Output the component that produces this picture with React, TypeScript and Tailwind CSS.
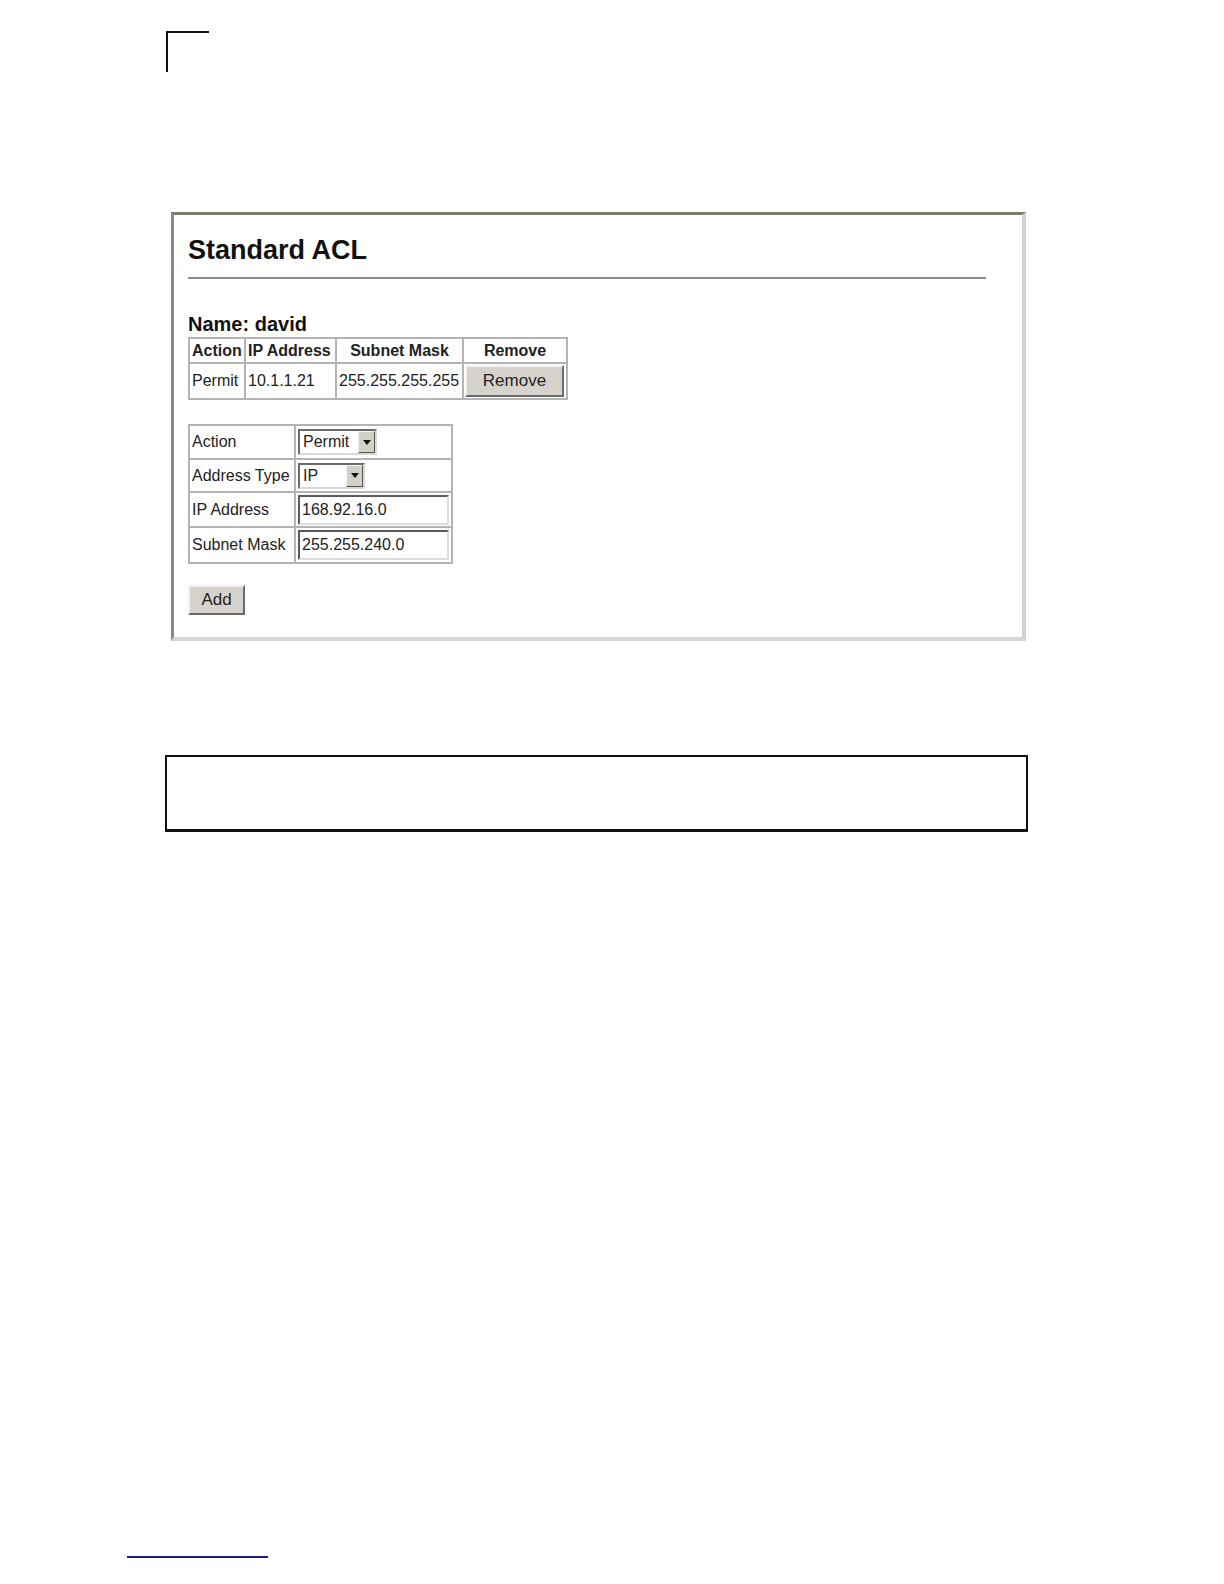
import React from 'react';

const font = { fontFamily: '"Liberation Sans", Arial, sans-serif' };

const cell = 'border-2 border-[#b4b4b4] px-[2px] leading-none';

const SelectBox = ({ value, width }: { value: string; width: string }) => (
  <div
    className={`flex h-[26px] items-stretch border-2 border-t-[#6b6b6b] border-l-[#6b6b6b] border-r-[#d8d8d8] border-b-[#d8d8d8] bg-white ${width}`}
  >
    <div className="flex flex-1 items-center pl-[3px] text-[16px] text-[#222]">{value}</div>
    <div className="flex w-[17px] items-center justify-center border border-t-[#f4f4f4] border-l-[#f4f4f4] border-r-[#555] border-b-[#555] bg-[#d4d0c8]">
      <svg width="8" height="5" viewBox="0 0 8 5">
        <path d="M0 0h8L4 5z" fill="#111" />
      </svg>
    </div>
  </div>
);

const TextBox = ({ value }: { value: string }) => (
  <div className="flex h-[30px] w-[151px] items-center border-2 border-t-[#5a5a5a] border-l-[#5a5a5a] border-r-[#dcdcdc] border-b-[#dcdcdc] bg-white pl-[2px] text-[16px] text-[#222]">
    {value}
  </div>
);

const GrayButton = ({ label, className }: { label: string; className: string }) => (
  <div
    className={`flex items-center justify-center border-2 border-t-[#f2f2f2] border-l-[#f2f2f2] border-r-[#6a6a6a] border-b-[#6a6a6a] bg-[#d6d3cd] text-[17px] text-[#222] ${className}`}
  >
    {label}
  </div>
);

export default function App() {
  return (
    <div className="relative flex h-[1584px] w-[1224px] flex-col bg-white" style={font}>
      {/* crop mark */}
      <div className="ml-[166px] mt-[31px] h-[41px] w-[43px] border-l-2 border-t-2 border-[#111]" />

      {/* screenshot panel */}
      <div className="ml-[171px] mt-[140px] h-[429px] w-[855px] border-t-[3px] border-l-[3px] border-r-[4px] border-b-[4px] border-t-[#7c7f66] border-l-[#8a8a8a] border-r-[#d2d2d2] border-b-[#d6d6d6] bg-white">
        <div className="flex flex-col pl-[14px] pt-[22px]">
          <h1 className="text-[27px] font-bold leading-none text-[#111]">Standard ACL</h1>
          <div className="mt-[13px] h-[2px] w-[798px] bg-[#8c8c8c]" />

          <div className="mt-[35px] text-[20px] font-bold leading-none text-[#111]">Name: david</div>

          <table className="mt-[3px] w-[380px] border-collapse border-2 border-[#b4b4b4] text-[16px] text-[#222]">
            <thead>
              <tr className="h-[25px] font-bold">
                <th className={`${cell} w-[56px] text-left`}>Action</th>
                <th className={`${cell} w-[91px] text-left`}>IP Address</th>
                <th className={`${cell} w-[127px] text-center`}>Subnet Mask</th>
                <th className={`${cell} text-center`}>Remove</th>
              </tr>
            </thead>
            <tbody>
              <tr className="h-[36px]">
                <td className={cell}>Permit</td>
                <td className={cell}>10.1.1.21</td>
                <td className={`${cell} px-0`}>255.255.255.255</td>
                <td className="border-2 border-[#b4b4b4] p-0">
                  <GrayButton label="Remove" className="ml-[1px] h-[32px] w-[99px]" />
                </td>
              </tr>
            </tbody>
          </table>

          <table className="mt-[24px] w-[265px] border-collapse border-2 border-[#b4b4b4] text-[16px] text-[#222]">
            <tbody>
              <tr className="h-[34px]">
                <td className={`${cell} w-[107px]`}>Action</td>
                <td className={cell}>
                  <SelectBox value="Permit" width="w-[79px]" />
                </td>
              </tr>
              <tr className="h-[33px]">
                <td className={cell}>Address Type</td>
                <td className={cell}>
                  <SelectBox value="IP" width="w-[67px]" />
                </td>
              </tr>
              <tr className="h-[35px]">
                <td className={cell}>IP Address</td>
                <td className={cell}>
                  <TextBox value="168.92.16.0" />
                </td>
              </tr>
              <tr className="h-[36px]">
                <td className={cell}>Subnet Mask</td>
                <td className={cell}>
                  <TextBox value="255.255.240.0" />
                </td>
              </tr>
            </tbody>
          </table>

          <GrayButton label="Add" className="mt-[21px] h-[30px] w-[57px]" />
        </div>
      </div>

      {/* empty note box */}
      <div className="ml-[165px] mt-[114px] h-[77px] w-[863px] border-2 border-b-[3px] border-[#111]" />

      {/* footer rule */}
      <div className="ml-[127px] mt-[724px] h-[2px] w-[141px] bg-[#1c1c86]" />
    </div>
  );
}
